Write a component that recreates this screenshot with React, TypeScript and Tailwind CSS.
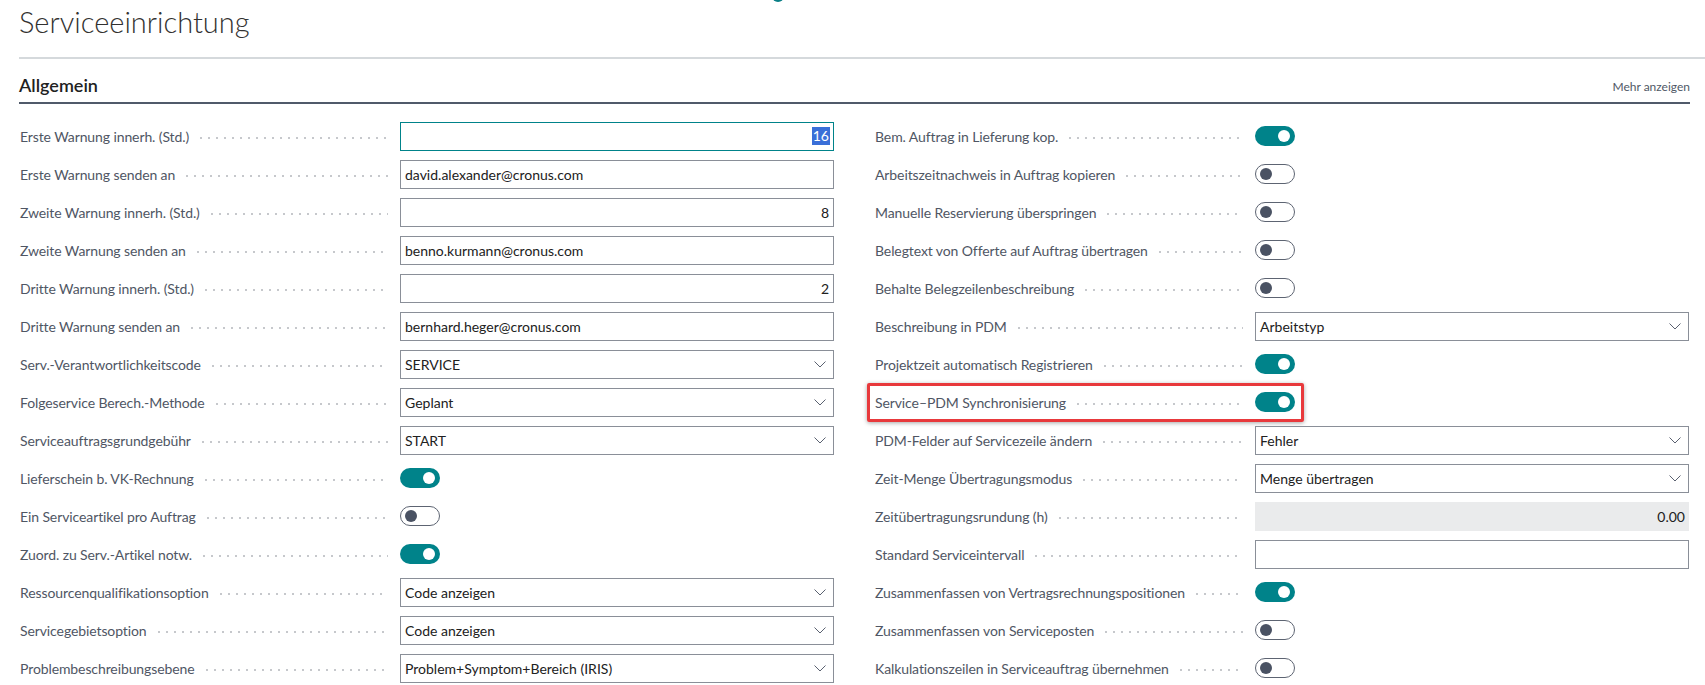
import React from "react";

type Field =
  | { label: string; kind: "text"; value: string; right?: boolean; focused?: boolean }
  | { label: string; kind: "select"; value: string }
  | { label: string; kind: "toggle"; on: boolean; highlight?: boolean }
  | { label: string; kind: "readonly"; value: string };

const left: Field[] = [
  { label: "Erste Warnung innerh. (Std.)", kind: "text", value: "16", right: true, focused: true },
  { label: "Erste Warnung senden an", kind: "text", value: "david.alexander@cronus.com" },
  { label: "Zweite Warnung innerh. (Std.)", kind: "text", value: "8", right: true },
  { label: "Zweite Warnung senden an", kind: "text", value: "benno.kurmann@cronus.com" },
  { label: "Dritte Warnung innerh. (Std.)", kind: "text", value: "2", right: true },
  { label: "Dritte Warnung senden an", kind: "text", value: "bernhard.heger@cronus.com" },
  { label: "Serv.-Verantwortlichkeitscode", kind: "select", value: "SERVICE" },
  { label: "Folgeservice Berech.-Methode", kind: "select", value: "Geplant" },
  { label: "Serviceauftragsgrundgebühr", kind: "select", value: "START" },
  { label: "Lieferschein b. VK-Rechnung", kind: "toggle", on: true },
  { label: "Ein Serviceartikel pro Auftrag", kind: "toggle", on: false },
  { label: "Zuord. zu Serv.-Artikel notw.", kind: "toggle", on: true },
  { label: "Ressourcenqualifikationsoption", kind: "select", value: "Code anzeigen" },
  { label: "Servicegebietsoption", kind: "select", value: "Code anzeigen" },
  { label: "Problembeschreibungsebene", kind: "select", value: "Problem+Symptom+Bereich (IRIS)" },
];

const right: Field[] = [
  { label: "Bem. Auftrag in Lieferung kop.", kind: "toggle", on: true },
  { label: "Arbeitszeitnachweis in Auftrag kopieren", kind: "toggle", on: false },
  { label: "Manuelle Reservierung überspringen", kind: "toggle", on: false },
  { label: "Belegtext von Offerte auf Auftrag übertragen", kind: "toggle", on: false },
  { label: "Behalte Belegzeilenbeschreibung", kind: "toggle", on: false },
  { label: "Beschreibung in PDM", kind: "select", value: "Arbeitstyp" },
  { label: "Projektzeit automatisch Registrieren", kind: "toggle", on: true },
  { label: "Service–PDM Synchronisierung", kind: "toggle", on: true, highlight: true },
  { label: "PDM-Felder auf Servicezeile ändern", kind: "select", value: "Fehler" },
  { label: "Zeit-Menge Übertragungsmodus", kind: "select", value: "Menge übertragen" },
  { label: "Zeitübertragungsrundung (h)", kind: "readonly", value: "0.00" },
  { label: "Standard Serviceintervall", kind: "text", value: "" },
  { label: "Zusammenfassen von Vertragsrechnungspositionen", kind: "toggle", on: true },
  { label: "Zusammenfassen von Serviceposten", kind: "toggle", on: false },
  { label: "Kalkulationszeilen in Serviceauftrag übernehmen", kind: "toggle", on: false },
];

function Toggle({ on }: { on: boolean }) {
  if (on) {
    return (
      <div className="w-[40px] h-[20px] rounded-full bg-[#00838a] flex items-center justify-end pr-[5px]">
        <div className="w-[12px] h-[12px] rounded-full bg-white" />
      </div>
    );
  }
  return (
    <div className="w-[40px] h-[20px] rounded-full border border-[#5d6472] bg-white flex items-center pl-[4px]">
      <div className="w-[12px] h-[12px] rounded-full bg-[#4a5263]" />
    </div>
  );
}

function Control({ f }: { f: Field }) {
  if (f.kind === "toggle") return <Toggle on={f.on} />;
  if (f.kind === "readonly") {
    return (
      <div className="w-[434px] h-[29px] bg-[#eaebec] flex items-center justify-end pr-[4px] text-[14px] text-[#212121]">
        {f.value}
      </div>
    );
  }
  if (f.kind === "select") {
    return (
      <div className="w-[434px] h-[29px] border border-[#8a8f98] flex items-center justify-between pl-[4px] pr-[7px] text-[14px] text-[#212121]">
        <span>{f.value}</span>
        <svg width="12" height="7" viewBox="0 0 12 7" className="shrink-0">
          <polyline points="0.5,0.5 6,6 11.5,0.5" fill="none" stroke="#5a6170" strokeWidth="1" />
        </svg>
      </div>
    );
  }
  return (
    <div
      className={
        f.focused
          ? "w-[434px] h-[29px] border border-[#00838a] flex items-center justify-end pr-[3px] text-[14px]"
          : f.right
          ? "w-[434px] h-[29px] border border-[#8a8f98] flex items-center justify-end pr-[4px] text-[14px] text-[#212121]"
          : "w-[434px] h-[29px] border border-[#8a8f98] flex items-center pl-[4px] text-[14px] text-[#212121]"
      }
    >
      {f.focused ? (
        <span className="bg-[#3a6fd8] text-white px-[1px] leading-[18px]">{f.value}</span>
      ) : (
        f.value
      )}
    </div>
  );
}

function Row({ f }: { f: Field }) {
  const hl = f.kind === "toggle" && f.highlight;
  return (
    <div className="relative h-[38px] flex items-center">
      <div className="w-[380px] flex items-center pr-[12px] min-w-0">
        <span className="text-[14px] tracking-[-0.1px] text-[#4f5664] whitespace-nowrap">{f.label}</span>
        <div className="flex-1 ml-[8px] mt-[3px] h-[4px] bg-[radial-gradient(circle,#c6c8cc_0.8px,transparent_1.1px)] bg-[length:8px_4px]" />
      </div>
      <Control f={f} />
      {hl && (
        <div className="absolute -left-[8px] top-0 w-[437px] h-[39px] border-[3px] border-[#e8393c] rounded-[2px] shadow-[0_1px_4px_rgba(0,0,0,0.35)] pointer-events-none" />
      )}
    </div>
  );
}

export default function App() {
  return (
    <div className="relative w-[1705px] h-[685px] overflow-hidden bg-white font-['Lato',sans-serif]">
      <div className="absolute left-[772px] -top-[10px] w-[12px] h-[12px] rounded-full border-b-[2px] border-[#0a7f86]" />
      <div className="pl-[19px] pt-[4px] text-[29px] leading-[35px] font-light text-[#323130]">
        Serviceeinrichtung
      </div>
      <div className="mt-[18px] ml-[19px] h-[2px] bg-[#d5d9dc]" />
      <div className="mt-[15px] ml-[19px] w-[1671px] flex items-center justify-between pb-[6px] border-b-2 border-[#505a6a]">
        <span className="text-[18px] leading-[22px] font-semibold text-[#212121]">Allgemein</span>
        <span className="text-[12px] text-[#505866] pt-[4px]">Mehr anzeigen</span>
      </div>
      <div className="mt-[13px] px-[20px] grid grid-cols-[814px_814px] gap-x-[41px]">
        <div className="flex flex-col">
          {left.map((f, i) => (
            <Row key={i} f={f} />
          ))}
        </div>
        <div className="flex flex-col">
          {right.map((f, i) => (
            <Row key={i} f={f} />
          ))}
        </div>
      </div>
    </div>
  );
}
